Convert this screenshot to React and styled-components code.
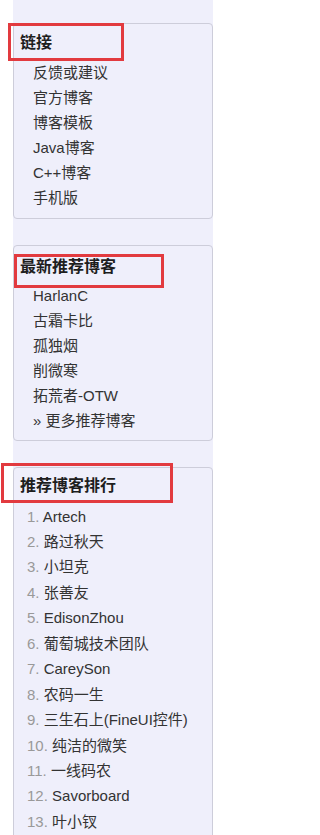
import React from 'react'
import styled, { createGlobalStyle } from 'styled-components'

const GlobalStyle = createGlobalStyle`
    html, body {
        margin: 0;
        padding: 0;
        background: #fff;
    }
    body {
        font-family: "Liberation Sans", "Noto Sans CJK SC", sans-serif;
    }
`

const links = ['反馈或建议', '官方博客', '博客模板', 'Java博客', 'C++博客', '手机版']
const recommended = ['HarlanC', '古霜卡比', '孤独烟', '削微寒', '拓荒者-OTW']
const ranking = [
    'Artech', '路过秋天', '小坦克', '张善友', 'EdisonZhou', '葡萄城技术团队', 'CareySon',
    '农码一生', '三生石上(FineUI控件)', '纯洁的微笑', '一线码农', 'Savorboard', '叶小钗',
]

export default function App() {
    return (
        <>
            <GlobalStyle />
            <Sidebar>
                <Box $pt={5.5} $pb={8.5}>
                    <Mark $left={-6} $top={-1} $width={116} $height={38} />
                    <Title>链接</Title>
                    <List $mt={4}>
                        {links.map(l => <Item key={l}>{l}</Item>)}
                    </List>
                </Box>

                <Box $pt={8} $pb={7.5}>
                    <Mark $left={0} $top={8} $width={150} $height={34} />
                    <Title>最新推荐博客</Title>
                    <List $mt={2.5}>
                        {recommended.map(l => <Item key={l}>{l}</Item>)}
                        <Item>» 更多推荐博客</Item>
                    </List>
                </Box>

                <Box $pt={5} $pb={8}>
                    <Mark $left={-13} $top={-5} $width={172} $height={40} />
                    <Title>推荐博客排行</Title>
                    <List $mt={4.5} $row={25.45} $indent={13}>
                        {ranking.map((name, i) => (
                            <Item key={name}><Num>{i + 1}. </Num>{name}</Item>
                        ))}
                    </List>
                </Box>
            </Sidebar>
        </>
    )
}

const Sidebar = styled.div`
    width: 200px;
    margin-left: 13px;
    padding-top: 23px;
    min-height: 835px;
    box-sizing: border-box;
    background: #efeffb;
    display: flex;
    flex-direction: column;
    gap: 26px;
`

const Box = styled.div`
    position: relative;
    border: 1px solid #cdcdda;
    border-radius: 4px;
    padding: ${p => p.$pt}px 0 ${p => p.$pb}px;
`

const Mark = styled.div`
    position: absolute;
    left: ${p => p.$left}px;
    top: ${p => p.$top}px;
    width: ${p => p.$width}px;
    height: ${p => p.$height}px;
    border: 3px solid #e23a3f;
    box-sizing: border-box;
    pointer-events: none;
`

const Title = styled.div`
    padding-left: 6px;
    font-size: 16px;
    line-height: 26px;
    font-weight: bold;
    color: #1e1e1e;
`

const List = styled.ul`
    list-style: none;
    margin: ${p => p.$mt}px 0 0;
    padding: 0 0 0 ${p => p.$indent ?? 19}px;

    li {
        line-height: ${p => p.$row ?? 25}px;
    }
`

const Item = styled.li`
    font-size: 15px;
    color: #333;
    white-space: nowrap;
`

const Num = styled.span`
    color: #999;
`
